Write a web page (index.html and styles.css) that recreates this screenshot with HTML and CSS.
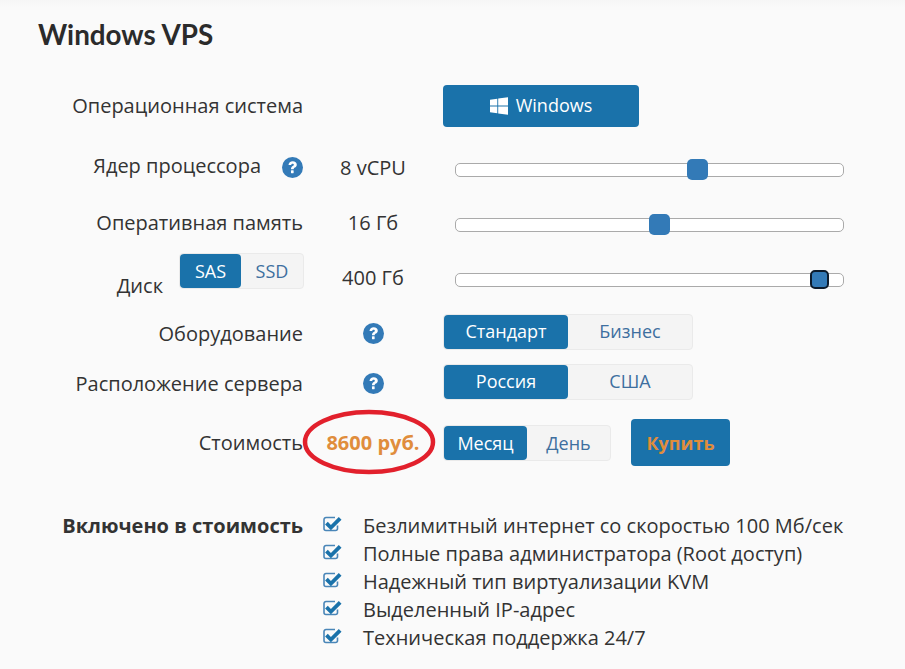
FILE: index.html
```html
<!DOCTYPE html>
<html lang="ru">
<head>
<meta charset="utf-8">
<title>Windows VPS</title>
<link rel="stylesheet" href="styles.css">
</head>
<body>
<svg width="0" height="0" class="defs">
  <symbol id="help" viewBox="0 0 22 22">
    <circle cx="11" cy="11" r="11" fill="#337ab7"/>
    <path d="M6.800 8.300c.2-2.500 2-3.900 4.400-3.900 2.500 0 4.300 1.400 4.300 3.600 0 1.700-1 2.400-2.100 3.100-.8.500-1.200.9-1.200 1.700H9.400c0-1.800.8-2.600 1.800-3.300.7-.5 1.200-.8 1.200-1.400 0-.7-.6-1.100-1.300-1.100-.8 0-1.300.5-1.500 1.500z" fill="#fff"/>
    <rect x="9.400" y="14" width="2.800" height="3" rx=".4" fill="#fff"/>
  </symbol>
  <symbol id="check" viewBox="0 0 19 16">
    <path d="M14.500 9.500V12.500a2 2 0 0 1-2 2H3a2 2 0 0 1-2-2V3.500a2 2 0 0 1 2-2H12" fill="none" stroke="#4a86b8" stroke-width="1.600"/>
    <path d="M4.800 5.800 7.900 8.900 15.800 1 18.500 3.700 7.900 14.300 2.100 8.500z" fill="#1a72aa"/>
  </symbol>
</svg>
<main class="page">
  <h1 class="title">Windows VPS</h1>
  <div class="config">
    <div class="row row-os">
      <div class="label label-up">Операционная система</div>
      <div class="value"></div>
      <div class="control">
        <button class="btn-os">
          <svg class="win" viewBox="0 0 18 18"><path d="M0 2.700 7.300 1.700V8.500H0zM8.200 1.600 18 .2V8.500H8.200zM0 9.400H7.300V16.300L0 15.300zM8.200 9.400H18V17.800L8.200 16.400z" fill="#fff"/></svg>
          <span class="btn-os-text">Windows</span>
        </button>
      </div>
    </div>
    <div class="row row-slider row-cpu">
      <div class="label label-raised"><span class="cpu-text">Ядер процессора</span> <svg class="help"><use href="#help"/></svg></div>
      <div class="value value-raised">8 vCPU</div>
      <div class="control"><div class="track"><span class="thumb" style="left:231px"></span></div></div>
    </div>
    <div class="row row-slider row-ram">
      <div class="label label-raised">Оперативная память</div>
      <div class="value value-raised">16 Гб</div>
      <div class="control"><div class="track"><span class="thumb" style="left:193px"></span></div></div>
    </div>
    <div class="row row-slider row-disk">
      <div class="label label-disk">
        <span class="disk-name">Диск</span>
        <div class="seg seg-disk"><span class="on">SAS</span><span class="off">SSD</span></div>
      </div>
      <div class="value value-raised">400 Гб</div>
      <div class="control"><div class="track"><span class="thumb thumb-focus" style="left:354px"></span></div></div>
    </div>
    <div class="row row-seg">
      <div class="label label-low">Оборудование</div>
      <div class="value value-low"><svg class="help"><use href="#help"/></svg></div>
      <div class="control"><div class="seg seg-wide"><span class="on">Стандарт</span><span class="off">Бизнес</span></div></div>
    </div>
    <div class="row row-seg">
      <div class="label label-low">Расположение сервера</div>
      <div class="value value-low"><svg class="help"><use href="#help"/></svg></div>
      <div class="control"><div class="seg seg-wide"><span class="on">Россия</span><span class="off">США</span></div></div>
    </div>
    <div class="row row-price">
      <div class="label">Стоимость</div>
      <div class="value price">8600 руб.</div>
      <div class="control control-price">
        <div class="seg seg-period"><span class="on">Месяц</span><span class="off">День</span></div>
        <button class="btn-buy">Купить</button>
      </div>
      <svg class="oval" viewBox="0 0 136 68"><ellipse cx="68" cy="33" rx="64" ry="30" fill="none" stroke="#e2202c" stroke-width="4.500"/></svg>
    </div>
    <div class="included">
      <div class="label label-bold">Включено в стоимость</div>
      <ul class="features">
        <li><svg class="check"><use href="#check"/></svg>Безлимитный интернет со скоростью 100 Мб/сек</li>
        <li><svg class="check"><use href="#check"/></svg>Полные права администратора (Root доступ)</li>
        <li><svg class="check"><use href="#check"/></svg>Надежный тип виртуализации KVM</li>
        <li><svg class="check"><use href="#check"/></svg>Выделенный IP-адрес</li>
        <li><svg class="check"><use href="#check"/></svg>Техническая поддержка 24/7</li>
      </ul>
    </div>
  </div>
</main>
</body>
</html>
```

FILE: styles.css
```css
* { box-sizing: border-box; }
html, body { margin: 0; height: 100%; }
body {
  background: linear-gradient(#f6f6f6, #fafafa 8px);
  color: #333;
  font-family: "Open Sans", "Noto Sans", sans-serif;
  font-size: 20px;
  overflow: hidden;
}
.defs { position: absolute; }
.page { padding: 15px 0 0 38px; width: 905px; height: 669px; }
.title {
  margin: 0;
  font-family: "Lato", "Open Sans", sans-serif;
  font-size: 27.800px;
  line-height: 40px;
  font-weight: 700;
  color: #2b2b2b;
}
.config { margin-top: 30px; }
.row {
  display: grid;
  grid-template-columns: 265px 140px 401px;
  align-items: center;
  position: relative;
}
.label {
  display: flex;
  justify-content: flex-end;
  align-items: center;
  text-align: right;
  white-space: nowrap;
}
.label-up { position: relative; top: -1px; }
.label-low, .value-low { position: relative; top: 1px; }
.value { display: flex; justify-content: center; align-items: center; }
.control { display: flex; align-items: center; }
.row-os { height: 42px; }
.row-cpu { height: 46px; margin-top: 20px; }
.row-ram { height: 46px; margin-top: 9px; }
.row-disk { height: 46px; margin-top: 9px; }
.row-seg { height: 36px; margin-top: 11px; }
.row-seg + .row-seg { margin-top: 14px; }
.row-price { height: 47px; margin-top: 19px; }
.label-raised, .value-raised { position: relative; top: -3px; }
.cpu-text { position: relative; top: -2px; }
.help { width: 21px; height: 21px; flex: none; }
.label .help { margin-left: 21px; }
.btn-os {
  width: 196px;
  height: 42px;
  border: 0;
  border-radius: 4px;
  background: #1a72aa;
  color: #fff;
  font: 18px "Open Sans", sans-serif;
  display: flex;
  align-items: center;
  justify-content: center;
  gap: 8px;
}
.btn-os-text { position: relative; top: -1px; }
.win { width: 18px; height: 18px; }
.track {
  position: relative;
  margin-left: 12px;
  width: 389px;
  height: 14px;
  background: #fff;
  border: 1px solid #aaa;
  border-radius: 5px;
}
.thumb {
  position: absolute;
  top: -5px;
  width: 21px;
  height: 21px;
  background: #337ab7;
  border-radius: 5px;
}
.thumb-focus { width: 19px; height: 19px; top: -4px; border: 2px solid #0c1b2c; }
.seg {
  display: flex;
  height: 36px;
  background: #f4f4f4;
  border: 1px solid #eaeaea;
  border-radius: 4px;
  font-size: 18px;
}
.seg span { display: flex; align-items: center; justify-content: center; padding-bottom: 2px; }
.seg .on { background: #1a72aa; color: #fff; border-radius: 4px; }
.seg .off { color: #3e6f9f; flex: 1; }
.seg-wide { width: 250px; }
.seg-wide .on { width: 124px; }
.seg-disk { width: 125px; margin-left: 16px; position: relative; top: -9px; left: 1px; }
.seg-disk .on { width: 61px; }
.seg-disk span { padding-bottom: 0; }
.disk-name { position: relative; top: 5px; left: 1px; }
.seg-period { width: 168px; }
.seg-period .on { width: 83px; }
.seg-period span { padding-bottom: 0; }
.control-price { gap: 20px; }
.price { color: #e08d3c; font-weight: 700; font-size: 20px; }
.btn-buy {
  width: 99px;
  height: 47px;
  border: 0;
  border-radius: 4px;
  background: #1a72aa;
  color: #e08d3c;
  font: 700 18px "Open Sans", sans-serif;
}
.oval { position: absolute; left: 263px; top: -10px; width: 136px; height: 68px; }
.included {
  display: grid;
  grid-template-columns: 265px 1fr;
  margin-top: 45px;
}
.label-bold { font-weight: 700; font-size: 20px; height: 28px; }
.features { list-style: none; margin: 0; padding: 0 0 0 20px; }
.features li { display: flex; align-items: center; height: 28px; white-space: nowrap; }
.check { width: 19px; height: 16px; margin-right: 21px; flex: none; position: relative; top: -1px; }
```
